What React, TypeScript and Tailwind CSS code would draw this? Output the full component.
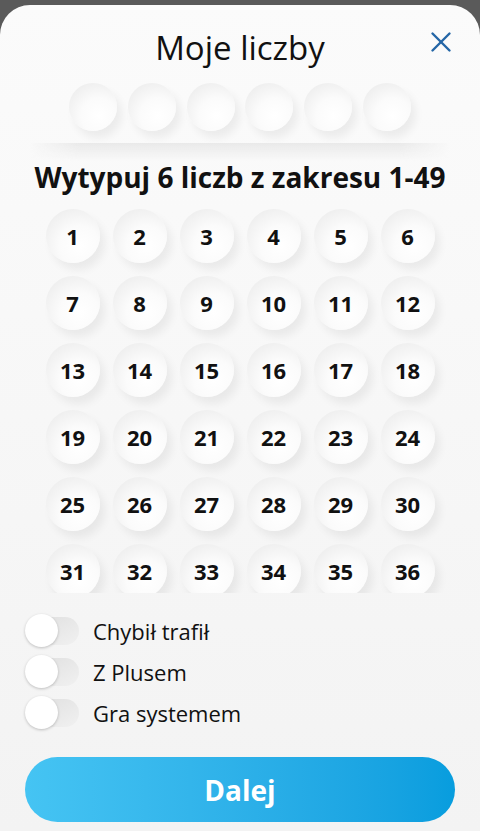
import { X } from 'lucide-react';

const NUMBERS = Array.from({ length: 49 }, (_, i) => i + 1);
const OPTIONS = ['Chybił trafił', 'Z Plusem', 'Gra systemem'];

const ball =
  'grid place-items-center rounded-full bg-[radial-gradient(circle_at_62%_68%,#ffffff_0%,#fbfbfb_40%,#e8e8e8_100%)] shadow-[5px_7px_9px_rgba(0,0,0,0.06)]';

export default function App() {
  return (
    <div className="flex h-[831px] flex-col bg-[#5a5a5a] pt-[5px] font-['Open_Sans',sans-serif] text-[#111]">
      <div className="relative flex flex-1 flex-col overflow-hidden rounded-t-[30px] bg-gradient-to-b from-[#fbfbfb] to-[#f3f3f3]">
        <button type="button" className="absolute right-[22px] top-[20px] text-[#2466a6]">
          <X className="h-[34px] w-[34px]" strokeWidth={1.7} />
        </button>

        <h1 className="mt-[23px] text-center text-[33px] leading-[40px] font-normal">Moje liczby</h1>

        <div className="mt-[15px] flex justify-center gap-[10.7px]">
          {Array.from({ length: 6 }, (_, i) => (
            <span key={i} className={`${ball} h-[48px] w-[48px]`} />
          ))}
        </div>

        {/* soft shade under the picked-numbers row */}
        <div className="mx-[30px] mt-[12px] h-[18px] bg-gradient-to-b from-[#e9e9e9] to-transparent [mask-image:linear-gradient(to_right,transparent,black_12%,black_88%,transparent)]" />

        <h2 className="text-center text-[28px] leading-[32px] font-bold">Wytypuj 6 liczb z zakresu 1-49</h2>

        <div className="mt-[7px] h-[393px] overflow-y-auto pt-[9px] [scrollbar-width:none]">
          <div className="grid grid-cols-[repeat(6,54px)] justify-center gap-x-[13px] gap-y-[13px] pb-[10px]">
            {NUMBERS.map((n) => (
              <span key={n} className={`${ball} h-[54px] w-[54px] text-[22px] leading-none font-bold`}>
                {n}
              </span>
            ))}
          </div>
        </div>

        <div className="mt-[21px] flex flex-col gap-[8px] px-[25px]">
          {OPTIONS.map((o) => (
            <label key={o} className="flex items-center gap-[14px]">
              <span className="relative flex h-[33px] w-[54px] items-center">
                <span className="absolute right-0 h-[28px] w-[50px] rounded-full bg-gradient-to-br from-[#dedede] to-[#f1f1f1]" />
                <span className="relative h-[33px] w-[33px] rounded-full bg-white shadow-[0_1px_3px_rgba(0,0,0,0.22)]" />
              </span>
              <span className="text-[22px] leading-[28px]">{o}</span>
            </label>
          ))}
        </div>

        <div className="mt-[28px] px-[25px]">
          <button
            type="button"
            className="h-[65px] w-full rounded-full bg-gradient-to-r from-[#45c4f3] to-[#079dde] text-[28px] font-bold text-white"
          >
            Dalej
          </button>
        </div>
      </div>
    </div>
  );
}
